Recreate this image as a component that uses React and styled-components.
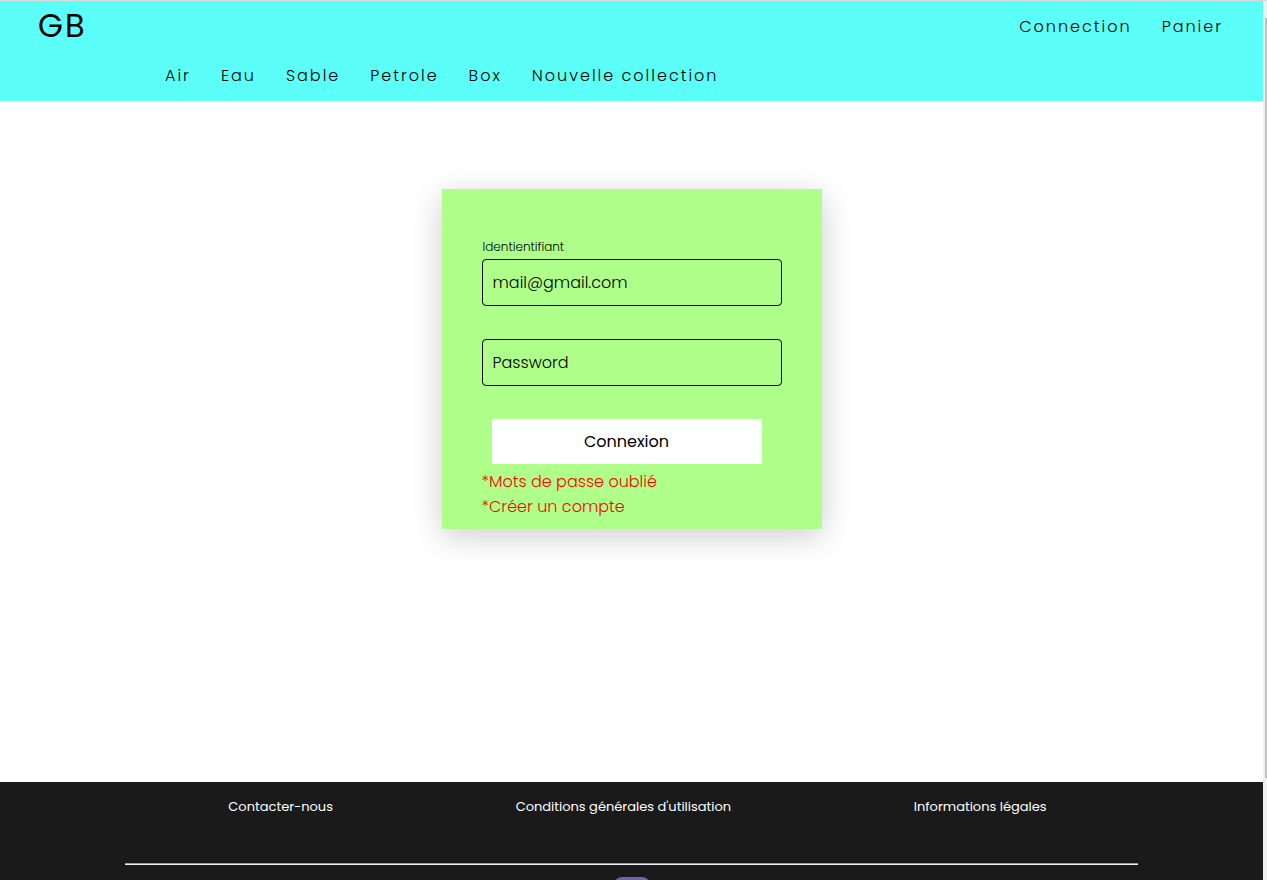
import React from 'react';
import styled, { createGlobalStyle } from 'styled-components';

const GlobalStyle = createGlobalStyle`
  *, *::before, *::after { box-sizing: border-box; }
  body {
    margin: 0;
    background: #fff;
    color: #000;
    font-family: Poppins, Inter, "Liberation Sans", sans-serif;
    font-size: 16px;
    font-weight: 300;
  }
  a { color: inherit; text-decoration: none; }
`;

const Window = styled.div`
  display: grid;
  grid-template-columns: minmax(0, 1fr) 4px;
  min-height: 100vh;
  border-top: 1px solid #dadada;
`;

const Page = styled.div`
  display: flex;
  flex-direction: column;
`;

const ScrollTrack = styled.div`
  background: #f0f0f0;
  padding: 17px 0 102px 2px;
  display: flex;
`;

const ScrollThumb = styled.div`
  flex: 1;
  background: #c1c1c1;
`;

const Header = styled.header`
  padding-bottom: 2px;
  background: #5bfff8;
  flex: none;
`;

const HeaderRow = styled.div`
  display: flex;
  align-items: center;
  justify-content: space-between;
  height: 50px;
  padding: 0 40px 0 38px;
`;

const Logo = styled.a`
  font-size: 32px;
  font-weight: 400;
  letter-spacing: 2px;
`;

const Nav = styled.nav`
  display: flex;
  align-items: center;
  gap: 30px;
  letter-spacing: 2px;
  white-space: nowrap;
`;

const CategoryNav = styled(Nav)`
  height: 48px;
  padding-left: 165px;
`;

const Main = styled.main`
  flex: 1;
  display: flex;
  justify-content: center;
  align-items: flex-start;
  padding: 88px 0;
`;

const Card = styled.form`
  width: 380px;
  padding: 70px 40px 10px;
  background: #afff8b;
  box-shadow: 0 7px 30px rgba(0, 0, 0, 0.2);
`;

const Field = styled.div`
  position: relative;
  margin-bottom: 33px;
`;

const Input = styled.input`
  display: block;
  width: 100%;
  height: 47px;
  padding: 0 10px;
  border: 1px solid #000;
  border-radius: 4px;
  background: transparent;
  color: #000;
  font: inherit;
  outline: none;
`;

const Label = styled.label`
  position: absolute;
  left: ${({ $raised }) => ($raised ? '1px' : '11px')};
  top: ${({ $raised }) => ($raised ? '-22px' : '14px')};
  font-size: ${({ $raised }) => ($raised ? '12px' : '16px')};
  line-height: 20px;
  pointer-events: none;
`;

const Submit = styled.button`
  display: block;
  width: 270px;
  height: 45px;
  margin: 0 10px 5px;
  padding: 0;
  border: 0;
  background: #fff;
  color: #000;
  font: inherit;
  font-weight: 400;
`;

const HelpLink = styled.a`
  display: block;
  color: #ff0000;
  line-height: 25px;
`;

const Footer = styled.footer`
  flex: none;
  height: 98px;
  padding: 0 125px;
  overflow: hidden;
  background: #1a1a1a;
  color: #fff;
`;

const FooterNav = styled.nav`
  display: flex;
  justify-content: space-around;
  align-items: center;
  height: 49px;
  padding-left: 12px;
  font-size: 13px;
  font-weight: 400;
  white-space: nowrap;
`;

const Rule = styled.hr`
  margin: 32px 0 12px;
  border: 0;
  border-top: 1px solid #9a9a9a;
  border-bottom: 1px solid #eee;
`;

const Social = styled.a`
  display: block;
  width: 36px;
  margin: 0 auto;
`;

const SocialSvg = styled.svg`
  display: block;
`;

const SocialIcon = () => (
  <SocialSvg width="36" height="36" viewBox="0 0 36 36" aria-hidden="true">
    <defs>
      <linearGradient id="tint" x1="0" y1="0" x2="1" y2="0">
        <stop offset="0" stopColor="#7a5aa6" />
        <stop offset="1" stopColor="#5a6db8" />
      </linearGradient>
    </defs>
    <rect width="36" height="36" rx="8" fill="url(#tint)" />
    <rect x="8" y="8" width="20" height="20" rx="6" fill="none" stroke="#fff" strokeWidth="2" />
    <circle cx="18" cy="18" r="5" fill="none" stroke="#fff" strokeWidth="2" />
  </SocialSvg>
);

const categories = ['Air', 'Eau', 'Sable', 'Petrole', 'Box', 'Nouvelle collection'];
const account = ['Connection', 'Panier'];
const legal = ['Contacter-nous', "Conditions générales d'utilisation", 'Informations légales'];

const links = (items) => items.map((item) => <a key={item} href="#">{item}</a>);

export default function App() {
  return (
    <Window>
      <GlobalStyle />
      <Page>
        <Header>
          <HeaderRow>
            <Logo href="#">GB</Logo>
            <Nav>{links(account)}</Nav>
          </HeaderRow>
          <CategoryNav>{links(categories)}</CategoryNav>
        </Header>
        <Main>
          <Card onSubmit={(e) => e.preventDefault()}>
            <Field>
              <Input id="login" type="text" defaultValue="mail@gmail.com" />
              <Label htmlFor="login" $raised>Identientifiant</Label>
            </Field>
            <Field>
              <Input id="password" type="password" />
              <Label htmlFor="password">Password</Label>
            </Field>
            <Submit type="submit">Connexion</Submit>
            <HelpLink href="#">*Mots de passe oublié</HelpLink>
            <HelpLink href="#">*Créer un compte</HelpLink>
          </Card>
        </Main>
        <Footer>
          <FooterNav>{links(legal)}</FooterNav>
          <Rule />
          <Social href="#" aria-label="Instagram"><SocialIcon /></Social>
        </Footer>
      </Page>
      <ScrollTrack><ScrollThumb /></ScrollTrack>
    </Window>
  );
}
